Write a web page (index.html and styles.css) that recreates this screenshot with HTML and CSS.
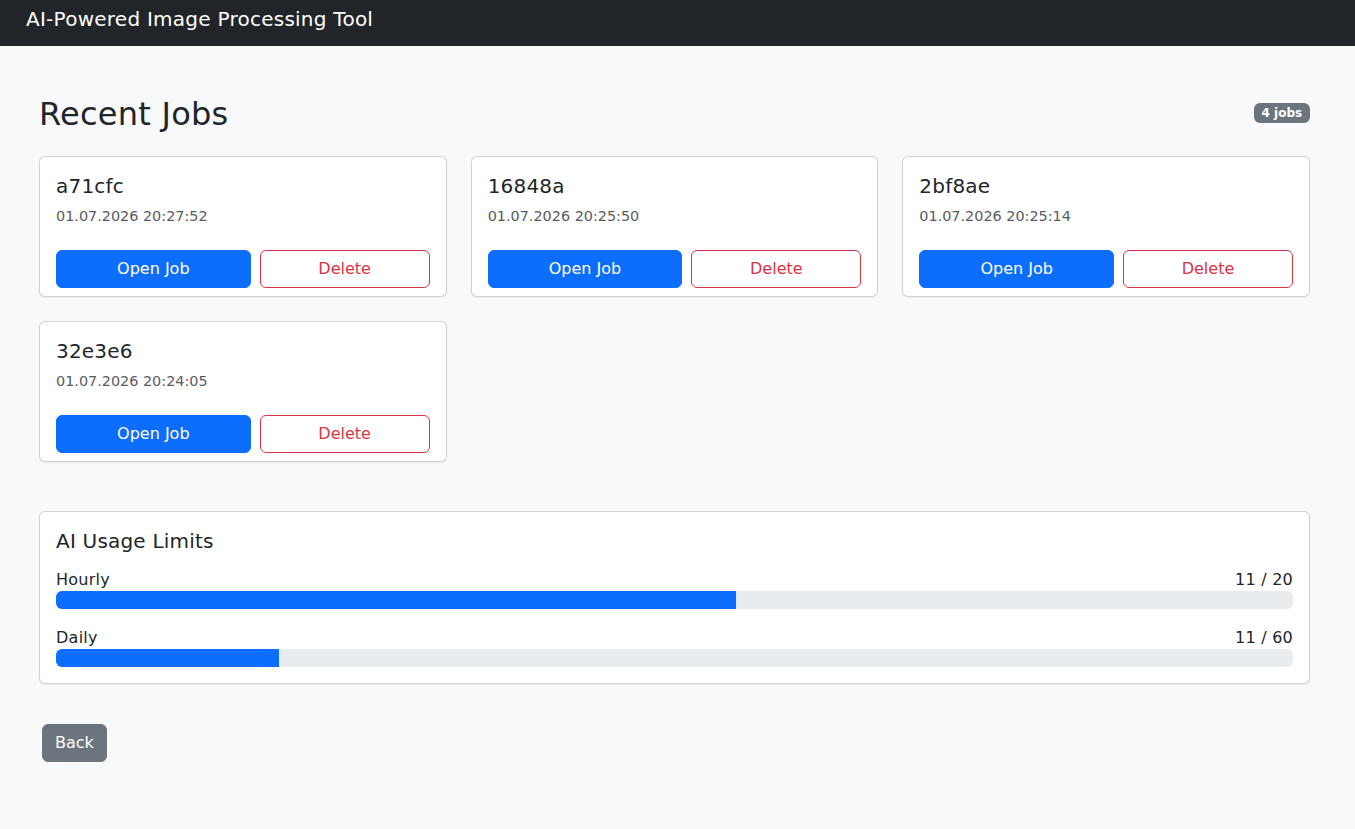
FILE: index.html
```html
<!DOCTYPE html>
<html lang="en">
<head>
<meta charset="utf-8">
<title>AI-Powered Image Processing Tool</title>
<link rel="stylesheet" href="styles.css">
</head>
<body>
<nav class="navbar">
  <span class="brand">AI-Powered Image Processing Tool</span>
</nav>

<main class="page">
  <div class="page-head">
    <h2 class="page-title">Recent Jobs</h2>
    <span class="badge">4 jobs</span>
  </div>

  <div class="job-grid">
    <div class="card job">
      <h5 class="job-id">a71cfc</h5>
      <div class="job-date">01.07.2026 20:27:52</div>
      <div class="job-actions">
        <button class="btn btn-primary">Open Job</button>
        <button class="btn btn-outline-danger">Delete</button>
      </div>
    </div>
    <div class="card job">
      <h5 class="job-id">16848a</h5>
      <div class="job-date">01.07.2026 20:25:50</div>
      <div class="job-actions">
        <button class="btn btn-primary">Open Job</button>
        <button class="btn btn-outline-danger">Delete</button>
      </div>
    </div>
    <div class="card job">
      <h5 class="job-id">2bf8ae</h5>
      <div class="job-date">01.07.2026 20:25:14</div>
      <div class="job-actions">
        <button class="btn btn-primary">Open Job</button>
        <button class="btn btn-outline-danger">Delete</button>
      </div>
    </div>
    <div class="card job">
      <h5 class="job-id">32e3e6</h5>
      <div class="job-date">01.07.2026 20:24:05</div>
      <div class="job-actions">
        <button class="btn btn-primary">Open Job</button>
        <button class="btn btn-outline-danger">Delete</button>
      </div>
    </div>
  </div>

  <div class="card usage">
    <h5 class="usage-title">AI Usage Limits</h5>
    <div class="limit">
      <div class="limit-row"><span>Hourly</span><span>11 / 20</span></div>
      <div class="progress"><div class="progress-bar" style="width: 55%"></div></div>
    </div>
    <div class="limit">
      <div class="limit-row"><span>Daily</span><span>11 / 60</span></div>
      <div class="progress"><div class="progress-bar" style="width: 18%"></div></div>
    </div>
  </div>

  <button class="btn btn-secondary back">Back</button>
</main>
</body>
</html>
```

FILE: styles.css
```css
* {
  box-sizing: border-box;
}

html, body {
  margin: 0;
  padding: 0;
}

body {
  font-family: "DejaVu Sans", "Noto Sans", sans-serif;
  font-size: 16px;
  line-height: 1.5;
  color: #212529;
  background: #f8f9fa;
  min-height: 829px;
}

h2, h5 {
  margin: 0;
  font-weight: 500;
  line-height: 1.2;
}

/* top bar */
.navbar {
  height: 46px;
  background: #212529;
  padding: 4px 26px 0;
}

.brand {
  display: block;
  color: #fff;
  font-size: 20px;
  line-height: 30px;
  letter-spacing: 0.25px;
}

/* content */
.page {
  padding: 49px 45px 40px 39px;
}

.page-head {
  display: flex;
  align-items: center;
  justify-content: space-between;
  margin-bottom: 23px;
}

.page-title {
  font-size: 32px;
  line-height: 38.4px;
  letter-spacing: 0.25px;
}

.badge {
  display: inline-block;
  background: #6c757d;
  color: #fff;
  font-size: 12px;
  font-weight: 700;
  line-height: 1;
  padding: 4.2px 7.8px;
  border-radius: 6px;
  margin-top: -2px;
}

.job-grid {
  display: grid;
  grid-template-columns: repeat(3, 1fr);
  gap: 24px;
  margin-bottom: 49px;
}

.card {
  background: #fff;
  border: 1px solid rgba(0, 0, 0, 0.175);
  border-radius: 6px;
  box-shadow: 0 1px 2px rgba(0, 0, 0, 0.06);
}

.job {
  padding: 17px 16px 8px;
}

.job-id {
  font-size: 20px;
  line-height: 24px;
  letter-spacing: 0.2px;
  margin-bottom: 8px;
}

.job-date {
  font-size: 14.4px;
  line-height: 21.6px;
  color: #595c5f;
  margin-bottom: 22px;
}

.job-actions {
  display: grid;
  grid-template-columns: 1fr 170px;
  gap: 9px;
}

.btn {
  display: inline-block;
  font-family: inherit;
  font-size: 16px;
  line-height: 24px;
  padding: 6px 12px;
  border: 1px solid transparent;
  border-radius: 6px;
  cursor: pointer;
  text-align: center;
  background: transparent;
}

.btn-primary {
  background: #0d6efd;
  border-color: #0d6efd;
  color: #fff;
}

.btn-outline-danger {
  border-color: #dc3545;
  color: #dc3545;
}

.btn-secondary {
  background: #6c757d;
  border-color: #6c757d;
  color: #fff;
}

/* usage limits */
.usage {
  padding: 17px 16px 16px;
}

.usage-title {
  font-size: 20px;
  line-height: 24px;
  letter-spacing: 0.2px;
  margin-bottom: 15px;
}

.limit + .limit {
  margin-top: 17px;
}

.limit-row {
  display: flex;
  justify-content: space-between;
  line-height: 23px;
  letter-spacing: 0.25px;
}

.progress {
  height: 18px;
  background: #e9ecef;
  border-radius: 6px;
  overflow: hidden;
}

.progress-bar {
  height: 100%;
  background: #0d6efd;
}

.back {
  margin-top: 40px;
  margin-left: 3px;
}
```
